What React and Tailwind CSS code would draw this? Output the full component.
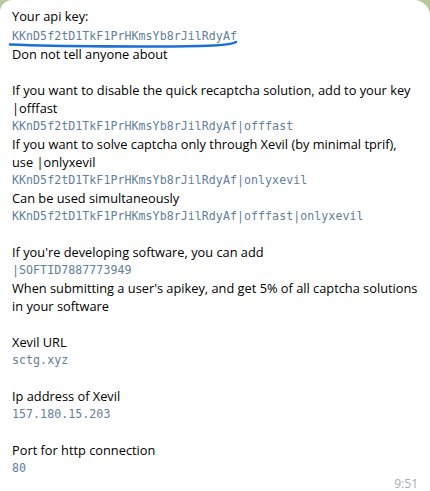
import React from "react";

const M = ({ children }) => (
  <div className="font-['DejaVu_Sans_Mono','Liberation_Mono',monospace] text-[11.6px] tracking-[0.05px] text-[#62809b]">{children}</div>
);
const T = ({ children }) => <div>{children}</div>;
const B = () => <div className="h-[18px]" />;

export default function App() {
  return (
    <div className="w-[430px] h-[491px] bg-[#b5c99a] overflow-hidden">
      <div className="relative w-[430px] h-[491px] bg-white rounded-tl-[12px] rounded-tr-[16px] pl-3 pr-[11px] pt-[7px] font-['Open_Sans',sans-serif] text-[12.8px] leading-[18px] text-black">
        <T>Your api key:</T>
        <div className="pt-[2px]"><M>KKnD5f2tD1TkF1PrHKmsYb8rJilRdyAf</M></div>
        <T>Don not tell anyone about</T>
        <B />
        <T>If you want to disable the quick recaptcha solution, add to your key |offfast</T>
        <M>KKnD5f2tD1TkF1PrHKmsYb8rJilRdyAf|offfast</M>
        <T>If you want to solve captcha only through Xevil (by minimal tprif), use |onlyxevil</T>
        <M>KKnD5f2tD1TkF1PrHKmsYb8rJilRdyAf|onlyxevil</M>
        <T>Can be used simultaneously</T>
        <M>KKnD5f2tD1TkF1PrHKmsYb8rJilRdyAf|offfast|onlyxevil</M>
        <B />
        <T>If you're developing software, you can add</T>
        <M>|SOFTID7887773949</M>
        <T>When submitting a user's apikey, and get 5% of all captcha solutions in your software</T>
        <B />
        <T>Xevil URL</T>
        <M>sctg.xyz</M>
        <B />
        <T>Ip address of Xevil</T>
        <M>157.180.15.203</M>
        <B />
        <T>Port for http connection</T>
        <M>80</M>
        <svg className="absolute left-0 top-0" width="260" height="60" viewBox="0 0 260 60">
          <path d="M10 44.5 C 60 46.5, 150 47, 200 46 C 220 45.5, 232 44.5, 236 42" stroke="#1d6fd8" strokeWidth="2.6" fill="none" strokeLinecap="round" />
        </svg>
        <div className="absolute right-[12px] bottom-[-2px] text-[12px] leading-[18px] text-[#a3adb6]">9:51</div>
      </div>
    </div>
  );
}
